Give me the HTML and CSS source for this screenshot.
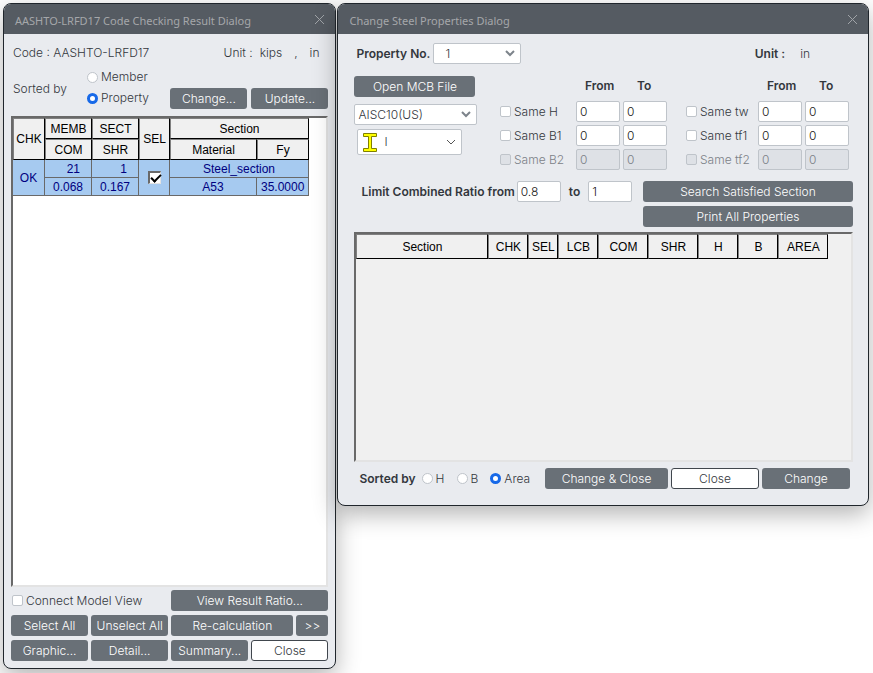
FILE: index.html
```
<!DOCTYPE html>
<html lang="en">
<head>
    <meta charset="UTF-8">
    <meta name="viewport" content="width=device-width, initial-scale=1.0">
    <title>Steel Code Checking</title>
    <link rel="stylesheet" href="styles.css">
</head>
<body>

<!-- Code Checking Result Dialog -->
<section class="dialog result-dialog">
    <header class="titlebar">
        <h1>AASHTO-LRFD17 Code Checking Result Dialog</h1>
        <button class="close-x" aria-label="Close dialog">
            <svg width="11" height="11" viewBox="0 0 11 11"><path d="M1 1L10 10M10 1L1 10"/></svg>
        </button>
    </header>

    <div class="result-body">
        <div class="code-row">
            <span>Code : AASHTO-LRFD17</span>
            <span class="units"><span>Unit :</span><span>kips</span><span class="comma">,</span><span>in</span></span>
        </div>

        <div class="sort-row">
            <span class="sort-label">Sorted by</span>
            <div class="sort-options">
                <label><input type="radio" name="result-sort"> Member</label>
                <label><input type="radio" name="result-sort" checked> Property</label>
            </div>
            <button class="btn">Change...</button>
            <button class="btn">Update...</button>
        </div>

        <div class="sheet result-sheet">
            <table class="result-table">
                <colgroup>
                    <col class="w32"><col class="w47"><col class="w47"><col class="w31"><col class="w87"><col class="w52">
                </colgroup>
                <thead>
                    <tr>
                        <th rowspan="2">CHK</th>
                        <th>MEMB</th>
                        <th>SECT</th>
                        <th rowspan="2">SEL</th>
                        <th colspan="2">Section</th>
                    </tr>
                    <tr>
                        <th>COM</th>
                        <th>SHR</th>
                        <th>Material</th>
                        <th>Fy</th>
                    </tr>
                </thead>
                <tbody>
                    <tr>
                        <td rowspan="2">OK</td>
                        <td class="num">21</td>
                        <td class="num">1</td>
                        <td rowspan="2"><input type="checkbox" class="sheet-check" aria-label="Select Steel_section" checked></td>
                        <td colspan="2">Steel_section</td>
                    </tr>
                    <tr>
                        <td>0.068</td>
                        <td>0.167</td>
                        <td>A53</td>
                        <td>35.0000</td>
                    </tr>
                </tbody>
            </table>
        </div>

        <div class="result-buttons">
            <label class="connect"><input type="checkbox"> Connect Model View</label>
            <button class="btn wide">View Result Ratio...</button>
            <button class="btn">Select All</button>
            <button class="btn">Unselect All</button>
            <div class="wide recalc">
                <button class="btn">Re-calculation</button>
                <button class="btn more">&gt;&gt;</button>
            </div>
            <button class="btn">Graphic...</button>
            <button class="btn">Detail...</button>
            <button class="btn">Summary...</button>
            <button class="btn light">Close</button>
        </div>
    </div>
</section>

<!-- Change Steel Properties Dialog -->
<section class="dialog property-dialog">
    <header class="titlebar">
        <h1>Change Steel Properties Dialog</h1>
        <button class="close-x" aria-label="Close dialog">
            <svg width="11" height="11" viewBox="0 0 11 11"><path d="M1 1L10 10M10 1L1 10"/></svg>
        </button>
    </header>

    <div class="property-body">
        <div class="property-row">
            <label class="bold" for="property-no">Property No.</label>
            <span class="select number-select">
                <select id="property-no"><option>1</option></select>
                <svg width="10" height="7" viewBox="0 0 10 7"><path d="M1 1L5 5L9 1"/></svg>
            </span>
            <span class="bold unit">Unit :</span>
            <span>in</span>
        </div>

        <div class="filter-row">
            <div class="source">
                <button class="btn open-file">Open MCB File</button>
                <span class="select">
                    <select aria-label="Section database"><option>AISC10(US)</option></select>
                    <svg width="10" height="7" viewBox="0 0 10 7"><path d="M1 1L5 5L9 1"/></svg>
                </span>
                <span class="select shape-select">
                    <svg class="beam" width="14" height="19" viewBox="0 0 14 19"><path d="M.5 .5H13.500V3.500H8.500V15.500H13.500V18.500H.5V15.500H5.500V3.500H.5Z"/></svg>
                    <select aria-label="Section shape"><option>I</option></select>
                    <svg class="thin" width="10" height="7" viewBox="0 0 10 7"><path d="M1 1L5 5L9 1"/></svg>
                </span>
            </div>

            <div class="limits">
                <span class="bold from">From</span>
                <span class="bold to">To</span>
                <label><input type="checkbox"> Same H</label>
                <input type="text" value="0" aria-label="H from">
                <input type="text" value="0" aria-label="H to">
                <label><input type="checkbox"> Same B1</label>
                <input type="text" value="0" aria-label="B1 from">
                <input type="text" value="0" aria-label="B1 to">
                <label class="off"><input type="checkbox" disabled> Same B2</label>
                <input type="text" value="0" aria-label="B2 from" disabled>
                <input type="text" value="0" aria-label="B2 to" disabled>
            </div>

            <div class="limits thickness">
                <span class="bold from">From</span>
                <span class="bold to">To</span>
                <label><input type="checkbox"> Same tw</label>
                <input type="text" value="0" aria-label="tw from">
                <input type="text" value="0" aria-label="tw to">
                <label><input type="checkbox"> Same tf1</label>
                <input type="text" value="0" aria-label="tf1 from">
                <input type="text" value="0" aria-label="tf1 to">
                <label class="off"><input type="checkbox" disabled> Same tf2</label>
                <input type="text" value="0" aria-label="tf2 from" disabled>
                <input type="text" value="0" aria-label="tf2 to" disabled>
            </div>
        </div>

        <div class="ratio-row">
            <div class="ratio">
                <label class="bold" for="ratio-from">Limit Combined Ratio from</label>
                <input type="text" id="ratio-from" value="0.8">
                <label class="bold ratio-to" for="ratio-to">to</label>
                <input type="text" id="ratio-to" value="1">
            </div>
            <div class="search">
                <button class="btn">Search Satisfied Section</button>
                <button class="btn">Print All Properties</button>
            </div>
        </div>

        <div class="sheet property-sheet">
            <table class="property-table">
                <colgroup>
                    <col class="w132"><col class="w40"><col class="w30"><col class="w40"><col class="w50"><col class="w50"><col class="w40"><col class="w40"><col class="w50">
                </colgroup>
                <thead>
                    <tr>
                        <th>Section</th>
                        <th>CHK</th>
                        <th>SEL</th>
                        <th>LCB</th>
                        <th>COM</th>
                        <th>SHR</th>
                        <th>H</th>
                        <th>B</th>
                        <th>AREA</th>
                    </tr>
                </thead>
            </table>
        </div>

        <div class="footer-row">
            <span class="bold">Sorted by</span>
            <div class="sort-by">
                <label><input type="radio" name="section-sort"> H</label>
                <label><input type="radio" name="section-sort"> B</label>
                <label><input type="radio" name="section-sort" checked> Area</label>
            </div>
            <div class="footer-buttons">
                <button class="btn">Change &amp; Close</button>
                <button class="btn light">Close</button>
                <button class="btn">Change</button>
            </div>
        </div>
    </div>
</section>

</body>
</html>
```
FILE: styles.css
```
* {
    box-sizing: border-box;
}

body {
    margin: 0;
    padding: 3px 4px 4px 3px;
    min-height: 100vh;
    display: flex;
    align-items: flex-start;
    gap: 1px;
    background: #fff;
    color: #33373d;
    font: 300 12px/16px Inter, "Liberation Sans", sans-serif;
}

button, input, select {
    margin: 0;
    font: inherit;
}

/* Dialog frame */
.dialog {
    display: flex;
    flex-direction: column;
    border: 1px solid #20262c;
    border-radius: 8px;
    background: #e9ebef;
    box-shadow: 0 8px 24px rgba(0, 0, 0, 0.3);
    overflow: hidden;
}

.result-dialog {
    flex: 333 1 0;
    min-height: calc(100vh - 7px);
}

.property-dialog {
    flex: 532 1 0;
}

.titlebar {
    display: flex;
    align-items: center;
    justify-content: space-between;
    height: 30px;
    padding: 0 10px 0 11px;
    background: #555b62;
}

.titlebar h1 {
    margin: 0;
    padding-top: 3px;
    color: #a5a7aa;
    font: 400 11px/16px "Noto Sans", sans-serif;
}

.close-x {
    display: flex;
    padding: 0;
    border: 0;
    background: none;
}

.close-x path {
    fill: none;
    stroke: #a0a4a8;
}

.bold {
    font-weight: 600;
}

label {
    display: flex;
    align-items: center;
    gap: 3px;
    white-space: nowrap;
}

/* Controls */
.btn {
    height: 21px;
    padding: 0;
    border: 0;
    border-radius: 3px;
    background: #697077;
    color: #fff;
    line-height: 20px;
    white-space: nowrap;
}

.btn.light {
    border: 1px solid #40464d;
    background: #fff;
    color: #33373d;
    line-height: 18px;
}

input[type="text"] {
    width: 44px;
    height: 21px;
    padding: 0 3px;
    border: 1px solid #bfc4ca;
    border-radius: 2px;
    background: #fff;
    color: #202020;
}

input[type="text"]:disabled {
    background: #dee1e6;
    color: #7c8086;
}

input[type="checkbox"], input[type="radio"] {
    appearance: none;
    flex: none;
    width: 11px;
    height: 11px;
    border: 1px solid #bfc4ca;
    border-radius: 2px;
    background: #fff;
}

input[type="radio"] {
    border-radius: 50%;
}

input[type="radio"]:checked {
    border: 3px solid #1769e8;
}

input[type="checkbox"]:disabled {
    background: #dee1e6;
}

.off {
    color: #7c8187;
}

.select {
    display: flex;
    align-items: center;
    height: 21px;
    padding-right: 5px;
    border: 1px solid #bfc4ca;
    border-radius: 2px;
    background: #fff;
}

.select select {
    appearance: none;
    flex: 1;
    min-width: 0;
    padding: 0 3px;
    border: 0;
    background: none;
    color: #33373d;
}

.select path {
    fill: none;
    stroke: #7d848b;
    stroke-width: 2;
}

.select .thin path {
    stroke: #555;
    stroke-width: 1;
}

.select .beam path {
    fill: #ffff00;
    stroke: #808000;
    stroke-width: 1;
}

/* Sunken sheets */
.sheet {
    border: 2px solid;
    border-color: #696969 #e3e3e3 #e3e3e3 #696969;
    font: 12px/14px "Liberation Sans", Arial, sans-serif;
}

.sheet table {
    table-layout: fixed;
    border-spacing: 0;
}

.sheet th {
    padding: 0;
    border: 1px solid;
    border-color: #808080 #000 #000 #808080;
    background: #f0f0f0;
    color: #000;
    font-weight: 400;
    white-space: nowrap;
}

.sheet td {
    height: 18px;
    padding: 0 4px;
    border: 1px solid #696969;
    border-width: 0 1px 1px 0;
    background: #a6caf0;
    color: #000080;
    text-align: center;
}

.sheet td.num {
    padding-right: 11px;
    text-align: right;
}

input.sheet-check {
    position: relative;
    display: block;
    width: 13px;
    height: 13px;
    margin: 0 auto;
    border-width: 2px 1px 1px 2px;
    border-color: #696969 #e3e3e3 #e3e3e3 #696969;
    border-radius: 0;
}

.sheet-check:checked::after {
    content: "";
    position: absolute;
    left: 1px;
    top: 1px;
    width: 8px;
    height: 4px;
    border: solid #000;
    border-width: 0 0 2px 2px;
    transform: rotate(-45deg);
}

.w30 { width: 30px; }
.w31 { width: 31px; }
.w32 { width: 32px; }
.w40 { width: 40px; }
.w47 { width: 47px; }
.w50 { width: 50px; }
.w52 { width: 52px; }
.w87 { width: 87px; }
.w132 { width: 132px; }

/* Result dialog */
.result-body {
    flex: 1;
    display: flex;
    flex-direction: column;
    padding: 11px 7px 7px;
}

.code-row {
    display: flex;
    justify-content: space-between;
    padding: 0 9px 0 2px;
}

.units {
    display: flex;
    gap: 7px;
}

.units .comma {
    padding: 0 5px;
}

.sort-row {
    display: flex;
    align-items: flex-end;
    gap: 4px;
    padding: 8px 0 7px;
}

.sort-row .btn {
    width: 77px;
}

.sort-label {
    width: 70px;
    padding-left: 2px;
    align-self: center;
}

.sort-options {
    flex: 1;
    display: grid;
    gap: 5px;
    padding: 0 0 3px 2px;
}

.result-sheet {
    flex: 1;
    margin-bottom: 3px;
    background: #fff;
}

.result-table {
    width: 296px;
}

.result-table th {
    height: 21px;
}

.result-buttons {
    display: grid;
    grid-template-columns: repeat(4, minmax(0, 1fr));
    gap: 4px 3px;
}

.result-buttons .wide, .connect {
    grid-column: span 2;
}

.connect {
    padding-left: 1px;
}

.recalc {
    display: flex;
    gap: 3px;
}

.recalc .btn {
    flex: 1;
}

.recalc .more {
    flex: 0 0 32px;
}

/* Property dialog */
.property-body {
    padding: 9px 15px 16px 16px;
}

.property-row {
    display: flex;
    align-items: center;
    padding: 0 43px 0 2px;
}

.number-select {
    width: 88px;
    margin-left: 3px;
}

.number-select select {
    padding-left: 11px;
}

.unit {
    margin: 0 15px 0 auto;
}

.filter-row {
    display: flex;
    align-items: flex-start;
    gap: 19px;
    padding: 12px 4px 11px 0;
}

.source {
    display: grid;
    gap: 7px;
    width: 123px;
    margin-right: auto;
}

.open-file {
    margin-right: 2px;
}

.shape-select {
    height: 26px;
    margin: -3px 15px 0 3px;
    padding-left: 5px;
}

.shape-select select {
    padding-left: 7px;
}

.limits {
    display: grid;
    grid-template-columns: 73px 44px 44px;
    gap: 3px;
    padding-top: 2px;
}

.limits .from {
    grid-column: 2;
}

.limits .from, .limits .to {
    padding: 0 0 4px 9px;
}

.limits .to {
    padding-left: 14px;
}

.thickness {
    grid-template-columns: 69px 44px 44px;
}

.ratio-row {
    display: flex;
    align-items: flex-start;
    justify-content: space-between;
    padding-bottom: 5px;
}

.ratio {
    display: flex;
    align-items: center;
    gap: 2px;
    padding-left: 7px;
}

.ratio-to {
    padding: 0 6px;
}

.search {
    display: grid;
    gap: 4px;
    width: 210px;
}

.property-sheet {
    min-height: 230px;
    background: #f0f0f0;
}

.property-table {
    width: 472px;
}

.property-table th {
    height: 25px;
}

.footer-row {
    display: flex;
    align-items: center;
    padding: 6px 3px 0 5px;
}

.sort-by {
    display: flex;
    gap: 12px;
    padding-left: 6px;
}

.footer-buttons {
    display: grid;
    grid-template-columns: 123px 88px 88px;
    gap: 3px;
    margin-left: auto;
}
```
